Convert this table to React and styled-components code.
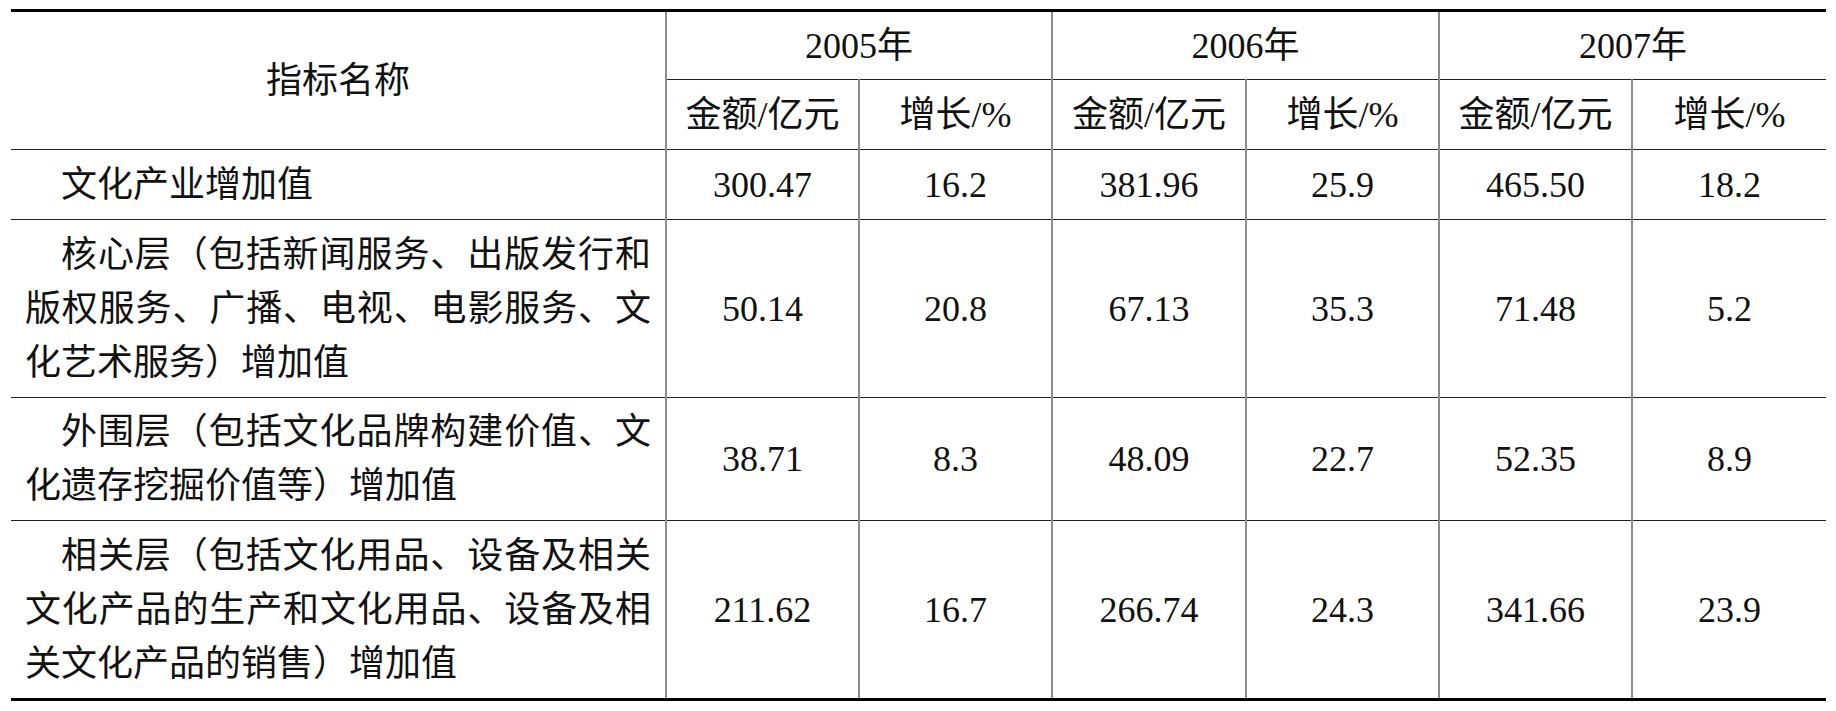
import styled, { createGlobalStyle } from "styled-components";

const GlobalStyle = createGlobalStyle`
html, body {
margin:0;
padding:0;
background:#fff;
}
`

const Page = styled.div`
padding:9px 0 0 11px;
`

const Table = styled.table`
width:1815px;
table-layout:fixed;
border-collapse:collapse;
border-top:3px solid #000;
border-bottom:3px solid #000;
font-family:"Liberation Serif","Noto Sans CJK SC",serif;
font-size:36px;
color:#111;
`

const Row = styled.tr`
height:${props => props.h}px;
`

const Cell = styled.td`
padding:0 14px;
line-height:54px;
vertical-align:middle;
text-align:center;
font-weight:400;
border-top:1px solid #222;
border-bottom:1px solid #222;
border-left:${props => props.first ? "none" : "2px solid #8c8c8c"};
white-space:nowrap;
`

const NameCell = styled(Cell)`
text-align:justify;
text-indent:1em;
white-space:normal;
word-break:break-all;
`

const HeadCell = styled(Cell).attrs({ as: "th" })`
font-weight:400;
`

const columns = [655, 193, 193, 194, 193, 193, 194]
const years = ["2005年", "2006年", "2007年"]

const rows = [
  { name: "文化产业增加值", h: 70, vals: ["300.47", "16.2", "381.96", "25.9", "465.50", "18.2"] },
  { name: "核心层（包括新闻服务、出版发行和版权服务、广播、电视、电影服务、文化艺术服务）增加值", h: 178, vals: ["50.14", "20.8", "67.13", "35.3", "71.48", "5.2"] },
  { name: "外围层（包括文化品牌构建价值、文化遗存挖掘价值等）增加值", h: 123, vals: ["38.71", "8.3", "48.09", "22.7", "52.35", "8.9"] },
  { name: "相关层（包括文化用品、设备及相关文化产品的生产和文化用品、设备及相关文化产品的销售）增加值", h: 179, vals: ["211.62", "16.7", "266.74", "24.3", "341.66", "23.9"] },
]

export default function App() {
  return (
    <Page>
      <GlobalStyle />
      <Table>
        <colgroup>
          {columns.map((w, i) => <col key={i} style={{ width: w }} />)}
        </colgroup>
        <thead>
          <Row h={69}>
            <HeadCell first rowSpan={2}>指标名称</HeadCell>
            {years.map(y => <HeadCell key={y} colSpan={2}>{y}</HeadCell>)}
          </Row>
          <Row h={70}>
            {years.map(y => [
              <HeadCell key={y + "a"}>金额/亿元</HeadCell>,
              <HeadCell key={y + "b"}>增长/%</HeadCell>,
            ])}
          </Row>
        </thead>
        <tbody>
          {rows.map(r => (
            <Row key={r.name} h={r.h}>
              <NameCell first>{r.name}</NameCell>
              {r.vals.map((v, i) => <Cell key={i}>{v}</Cell>)}
            </Row>
          ))}
        </tbody>
      </Table>
    </Page>
  )
}
